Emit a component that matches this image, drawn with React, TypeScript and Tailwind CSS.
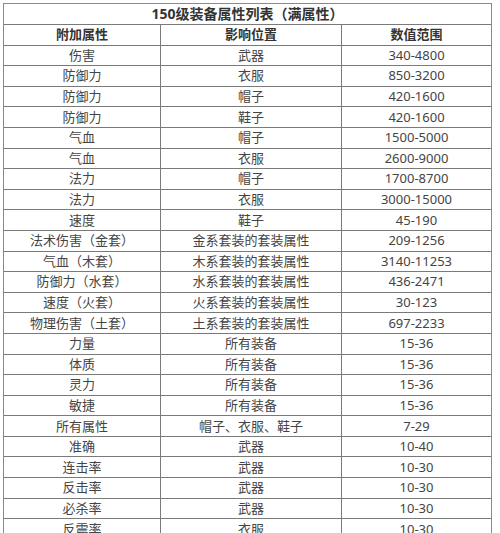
import React from 'react';

const ROWS: [string, string, string][] = [
  ['伤害', '武器', '340-4800'],
  ['防御力', '衣服', '850-3200'],
  ['防御力', '帽子', '420-1600'],
  ['防御力', '鞋子', '420-1600'],
  ['气血', '帽子', '1500-5000'],
  ['气血', '衣服', '2600-9000'],
  ['法力', '帽子', '1700-8700'],
  ['法力', '衣服', '3000-15000'],
  ['速度', '鞋子', '45-190'],
  ['法术伤害（金套）', '金系套装的套装属性', '209-1256'],
  ['气血（木套）', '木系套装的套装属性', '3140-11253'],
  ['防御力（水套）', '水系套装的套装属性', '436-2471'],
  ['速度（火套）', '火系套装的套装属性', '30-123'],
  ['物理伤害（土套）', '土系套装的套装属性', '697-2233'],
  ['力量', '所有装备', '15-36'],
  ['体质', '所有装备', '15-36'],
  ['灵力', '所有装备', '15-36'],
  ['敏捷', '所有装备', '15-36'],
  ['所有属性', '帽子、衣服、鞋子', '7-29'],
  ['准确', '武器', '10-40'],
  ['连击率', '武器', '10-30'],
  ['反击率', '武器', '10-30'],
  ['必杀率', '武器', '10-30'],
  ['反震率', '衣服', '10-30'],
];

const Row: React.FC<{ cells: [string, string, string]; bold?: boolean }> = ({ cells, bold }) => (
  <div className={`flex h-[20.6px] border-b border-[#7a7a7a] ${bold ? 'font-bold text-[#333]' : 'text-[#444]'}`}>
    <div className="w-[157px] shrink-0 border-r border-[#7a7a7a] flex items-center justify-center">{cells[0]}</div>
    <div className="w-[181px] shrink-0 border-r border-[#7a7a7a] flex items-center justify-center">{cells[1]}</div>
    <div className="flex-1 flex items-center justify-center">{cells[2]}</div>
  </div>
);

export default function App() {
  return (
    <div
      className="w-[500px] h-[533px] overflow-hidden bg-white pt-[3px] pl-[3px]"
      style={{ fontFamily: '"Noto Sans", "Noto Sans CJK SC", sans-serif' }}
    >
      <div className="w-[489px] border-t border-l border-r border-[#8a8a8a] text-[13px] leading-none">
        {/* Title */}
        <div className="h-[21px] border-b border-[#7a7a7a] flex items-center justify-center font-bold text-[14px] text-[#333]">
          150级装备属性列表（满属性）
        </div>
        <Row cells={['附加属性', '影响位置', '数值范围']} bold />
        {ROWS.map((r, i) => (
          <Row key={i} cells={r} />
        ))}
      </div>
    </div>
  );
}
